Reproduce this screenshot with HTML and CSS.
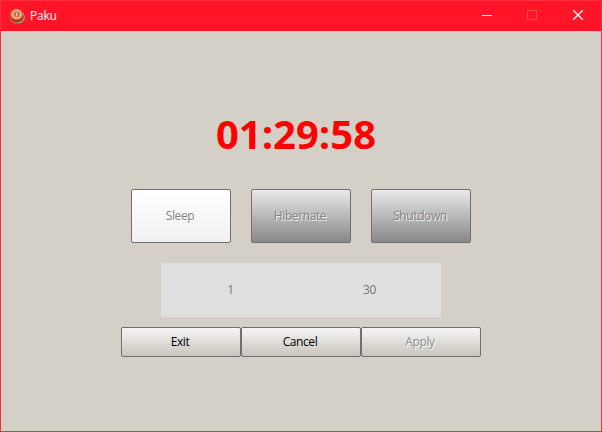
FILE: index.html
```html
<!DOCTYPE html>
<html lang="en">
<head>
<meta charset="utf-8">
<title>Paku</title>
<link rel="stylesheet" href="styles.css">
</head>
<body>
<div class="window">
  <header class="titlebar">
    <svg class="app-icon" width="16" height="16" viewBox="0 0 16 16">
      <ellipse cx="8.300" cy="9" rx="7.600" ry="6.600" fill="#a39a90"/>
      <ellipse cx="7.800" cy="8.400" rx="6.900" ry="6" fill="#b5300f"/>
      <ellipse cx="7.600" cy="6.300" rx="6.800" ry="5.800" fill="#e2673c"/>
      <ellipse cx="7.700" cy="6.200" rx="4.200" ry="3.700" fill="none" stroke="#ffe3d6" stroke-width="1.200"/>
      <path d="M7.700 4.500v3.400" stroke="#ffe3d6" stroke-width="1.200"/>
    </svg>
    <span class="title">Paku</span>
    <div class="controls">
      <svg width="46" height="30" viewBox="0 0 46 30"><path d="M17 14.500h10" stroke="#fff"/></svg>
      <svg width="46" height="30" viewBox="0 0 46 30"><rect x="16.500" y="9.500" width="9" height="9" fill="none" stroke="#ff4c5a"/></svg>
      <svg width="46" height="30" viewBox="0 0 46 30"><path d="M16.200 9.200l9.600 9.600m0-9.600l-9.600 9.600" stroke="#fff" stroke-width="1.300"/></svg>
    </div>
  </header>
  <main class="content">
    <div class="clock">01:29:58</div>
    <div class="modes">
      <button class="mode selected"><span>Sleep</span></button>
      <button class="mode"><span>Hibernate</span></button>
      <button class="mode"><span>Shutdown</span></button>
    </div>
    <div class="time"><span class="hours">1</span><span>30</span></div>
    <div class="actions">
      <button class="action"><span>Exit</span></button>
      <button class="action"><span>Cancel</span></button>
      <button class="action disabled"><span>Apply</span></button>
    </div>
  </main>
</div>
</body>
</html>
```
FILE: styles.css
```css
* { box-sizing: border-box; }
body {
  margin: 0;
  font: 12px/16px "Open Sans", "Noto Sans", sans-serif;
  letter-spacing: -0.4px;
}
.window {
  width: 602px;
  height: 432px;
  border: 1px solid #fb2c3d;
  background: #d4d0c8;
  overflow: hidden;
}
.titlebar {
  display: flex;
  align-items: center;
  height: 30px;
  padding-left: 8px;
  background: #ff1428;
  color: #fff;
}
.title { margin-left: 5px; letter-spacing: -0.2px; }
.controls { display: flex; margin-left: auto; margin-right: -2px; }
.content { display: flex; flex-direction: column; align-items: center; }
.clock {
  margin-top: 73px;
  width: 170px;
  margin-right: 10px;
  text-align: center;
  font-size: 40px;
  line-height: 60px;
  font-weight: 700;
  letter-spacing: 0;
  color: #f00;
}
.modes { display: flex; gap: 20px; margin-top: 25px; }
button {
  display: flex;
  align-items: center;
  justify-content: center;
  padding: 0 2px 0 0;
  border: 1px solid #707070;
  border-radius: 2px;
  font: inherit;
  letter-spacing: inherit;
}
.mode {
  width: 100px;
  height: 54px;
  background: linear-gradient(#e9e9e9, #888);
  color: #838383;
  text-shadow: 1px 1px #f4f4f4;
}
.mode.selected { background: linear-gradient(#fff, #f0f0f0); text-shadow: 1px 1px #fff; }
.time {
  display: grid;
  grid-template-columns: 1fr 1fr;
  align-items: center;
  width: 280px;
  height: 54px;
  margin-top: 20px;
  padding-right: 2px;
  background: #e0e0e0;
  color: #757575;
  text-align: center;
}
.hours { color: #8f6a94; }
.actions { display: flex; margin-top: 10px; }
.action {
  width: 120px;
  height: 30px;
  background: linear-gradient(#f5f5f3, #c9c5bd);
  color: #000;
}
.action.disabled { color: #8b8b8b; text-shadow: 1px 1px #fff; }
```
